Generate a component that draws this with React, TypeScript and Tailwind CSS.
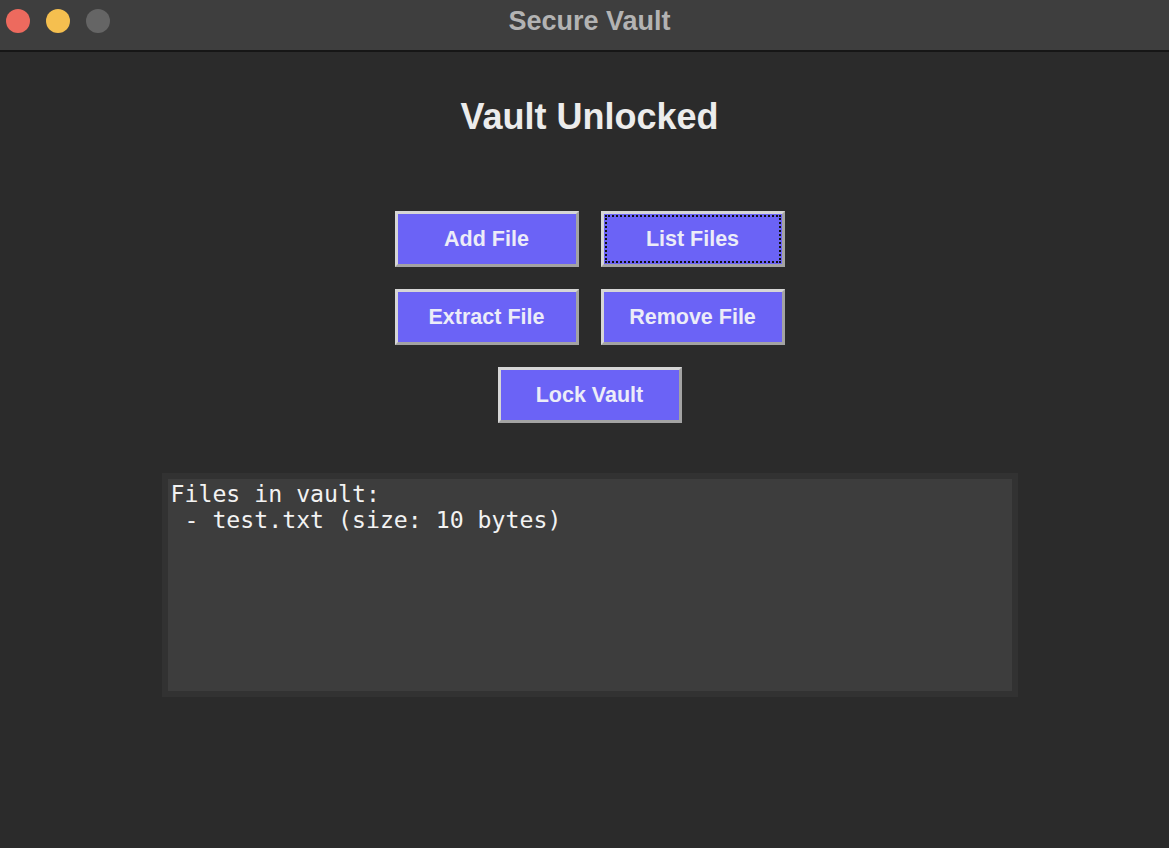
import React from 'react';

const sans = { fontFamily: '"Liberation Sans", Arial, sans-serif' };

function VaultButton({ label, focused }: { label: string; focused?: boolean }) {
  return (
    <button
      className="relative w-[184px] h-[56px] bg-[#6b63f6] border-[3px] border-t-[#d6d6d6] border-l-[#d6d6d6] border-b-[#a3a3a3] border-r-[#a3a3a3] text-[#ececf8] text-[21.5px] font-bold flex items-center justify-center"
      style={sans}
    >
      {focused && <span className="absolute inset-[1px] border-2 border-dotted border-[#111]" />}
      {label}
    </button>
  );
}

export default function App() {
  return (
    <div className="w-[1169px] h-[848px] bg-[#2b2b2b] flex flex-col overflow-hidden">
      {/* Title bar */}
      <div className="relative h-[52px] pl-[10px] bg-[#3e3e3e] border-b-2 border-[#161616] flex items-center justify-center shrink-0">
        <div className="absolute left-[6px] top-[9px] flex gap-[16px]">
          <span className="w-[24px] h-[24px] rounded-full bg-[#ed6a5e]" />
          <span className="w-[24px] h-[24px] rounded-full bg-[#f5bf4f]" />
          <span className="w-[24px] h-[24px] rounded-full bg-[#656565]" />
        </div>
        <span className="text-[27px] font-bold text-[#b3b3b3] -mt-[7px]" style={sans}>
          Secure Vault
        </span>
      </div>

      {/* Content */}
      <div className="flex flex-col items-center pl-[10px]">
        <h1 className="mt-[42px] text-[36px] font-bold text-[#ececec] leading-[46px]" style={sans}>
          Vault Unlocked
        </h1>

        <div className="mt-[71px] grid grid-cols-2 gap-[22px]">
          <VaultButton label="Add File" />
          <VaultButton label="List Files" focused />
          <VaultButton label="Extract File" />
          <VaultButton label="Remove File" />
        </div>
        <div className="mt-[22px]">
          <VaultButton label="Lock Vault" />
        </div>

        {/* Output */}
        <div className="mt-[50px] w-[856px] h-[224px] border-[6px] border-[#323232] bg-[#3d3d3d]">
          <pre
            className="px-[3px] pt-[2px] text-[23.2px] leading-[26px] text-[#f2f2f2]"
            style={{ fontFamily: '"DejaVu Sans Mono", "Liberation Mono", monospace' }}
          >
{`Files in vault:
 - test.txt (size: 10 bytes)`}
          </pre>
        </div>
      </div>
    </div>
  );
}
